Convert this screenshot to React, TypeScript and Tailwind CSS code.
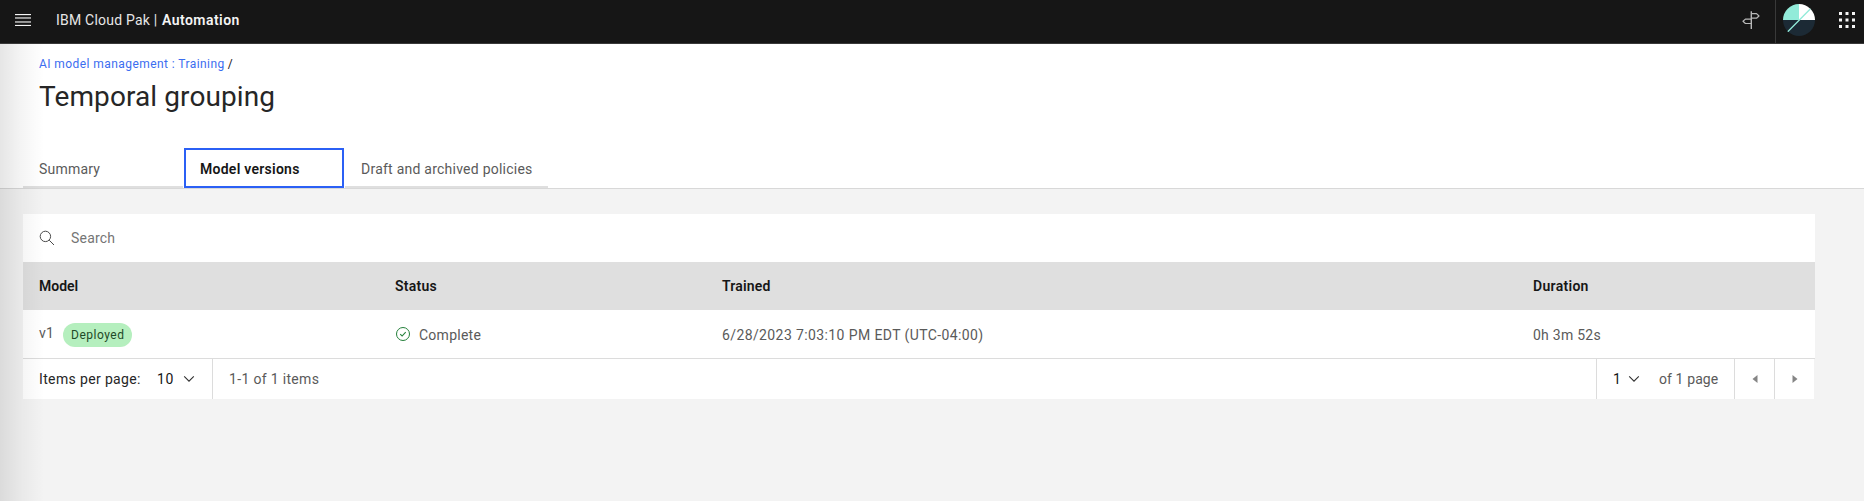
import type { ReactNode } from 'react';

function MenuIcon() {
  return (
    <svg width="16" height="12" viewBox="0 0 16 12" fill="#f4f4f4">
      <rect width="16" height="1.15" />
      <rect y="3.4" width="16" height="1.15" />
      <rect y="7.4" width="16" height="1.15" />
      <rect y="10.9" width="16" height="1.15" />
    </svg>
  );
}

function SignpostIcon() {
  return (
    <svg width="20" height="20" viewBox="0 0 20 20" fill="none" stroke="#b8b8b8" strokeWidth="1.2">
      <path d="M10.3 1.2V19" strokeWidth="1.4" />
      <path d="M10.3 3.6h5.2L18 6l-2.5 2.2h-5.2M10.3 9.1H4.4L2 11.3l2.4 2.2h5.9" strokeLinejoin="round" />
    </svg>
  );
}

function Avatar() {
  return (
    <svg width="32" height="32" viewBox="0 0 32 32">
      <path d="M0 16A16 16 0 0 1 16 0V16Z" fill="#92ebd9" />
      <path d="M16 0A16 16 0 0 1 32 16H16Z" fill="#fff" />
      <path d="M0 16A16 16 0 0 0 32 16Z" fill="#1c2a35" />
      <path d="M5.2 27.2 27 5.2" stroke="#92ebd9" strokeWidth="1.3" strokeLinecap="round" />
    </svg>
  );
}

function AppsIcon() {
  const steps = [0, 6.5, 13];
  return (
    <svg width="16" height="16" viewBox="0 0 16 16" fill="#f4f4f4">
      {steps.map((y) => steps.map((x) => <rect key={`${x}-${y}`} x={x} y={y} width="3" height="3" />))}
    </svg>
  );
}

function SearchIcon() {
  return (
    <svg width="16" height="16" viewBox="0 0 16 16" fill="none" stroke="#4a4a4a" strokeWidth="1">
      <circle cx="6.4" cy="6.4" r="5.2" />
      <path d="M10.2 10.2 15 15" />
    </svg>
  );
}

function Chevron() {
  return (
    <svg width="12" height="8" viewBox="0 0 12 8" fill="none" stroke="#303030" strokeWidth="1.1">
      <path d="M1.2 1.4 6 6.2l4.8-4.8" />
    </svg>
  );
}

function CheckIcon() {
  return (
    <svg width="16" height="16" viewBox="0 0 16 16" fill="none" stroke="#24803a" strokeWidth="1">
      <circle cx="8" cy="8" r="6.5" />
      <path d="M5.2 8.2 7.1 10l3.6-3.9" strokeWidth="1.1" />
    </svg>
  );
}

function Column({ className, title, children }: { className: string; title: ReactNode; children: ReactNode }) {
  return (
    <div className={className}>
      <div className="flex h-12 items-center bg-[#dfdfdf] pl-4 font-semibold text-[#161616]">{title}</div>
      <div className="flex h-12 items-center bg-white pl-4 pt-[2px] text-[#5a5a5a]">{children}</div>
    </div>
  );
}

export default function App() {
  return (
    <div className="relative flex h-[501px] w-[1864px] flex-col overflow-hidden bg-[#f3f3f3] font-['Roboto',sans-serif] text-sm leading-[18px] whitespace-nowrap text-[#161616]">
      <header className="flex h-11 shrink-0 items-center border-b border-[#393939] bg-[#161616] pb-[3px] text-[#f4f4f4]">
        <div className="ml-[15px]">
          <MenuIcon />
        </div>
        <div className="ml-[25px] flex">
          <span className="w-[106px] tracking-[0.22px] text-[#e6e6e6]">IBM Cloud Pak |</span>
          <span className="font-semibold tracking-[0.45px]">Automation</span>
        </div>
        <div className="ml-auto flex h-full items-center">
          <div className="mr-[14px]">
            <SignpostIcon />
          </div>
          <div className="-mb-[3px] h-[43px] w-px self-start bg-[#393939]" />
          <div className="ml-[7px]">
            <Avatar />
          </div>
          <div className="mr-[9px] ml-[24px]">
            <AppsIcon />
          </div>
        </div>
      </header>

      <section className="h-[145px] shrink-0 border-b border-[#d8d8d8] bg-white">
        <nav className="ml-[39px] flex gap-[3px] pt-[11px] text-xs leading-[18px]">
          <a className="tracking-[0.43px] text-[#3b6df0]">AI model management : Training</a>
          <span>/</span>
        </nav>
        <h1 className="mt-[6px] ml-[39px] text-[28px] leading-9 font-normal tracking-[0.1px] text-[#262626]">Temporal grouping</h1>
        <div className="mt-[33px] ml-[23px] flex h-10 gap-px">
          <div className="flex w-[160px] items-center border-b-2 border-[#dfdfdf] pt-[4px] pl-4 tracking-[0.2px] text-[#5a5a5a]">Summary</div>
          <div className="flex w-[160px] items-center border-2 border-[#2b60f5] pt-[2px] pl-[14px] font-semibold tracking-[0.26px]">Model versions</div>
          <div className="flex w-[203px] items-center border-b-2 border-[#dfdfdf] pt-[4px] pl-4 tracking-[0.24px] text-[#5a5a5a]">Draft and archived policies</div>
        </div>
      </section>

      <main className="mt-[25px] ml-[23px] w-[1792px]">
        <div className="flex h-12 items-center gap-4 bg-white pl-4">
          <SearchIcon />
          <span className="tracking-[0.2px] text-[#757575]">Search</span>
        </div>

        <div className="flex border-b border-[#dcdcdc]">
          <Column className="w-[356px]" title="Model">
            <span className="-mt-1 tracking-[0.3px]">v1</span>
            <span className="ml-[9px] flex h-6 w-[69px] items-center justify-center rounded-full bg-[#b5efbe] text-xs tracking-[0.5px] text-[#1f4a28]">Deployed</span>
          </Column>
          <Column className="w-[327px]" title={<span className="tracking-[0.25px]">Status</span>}>
            <span className="-mt-[3px]">
              <CheckIcon />
            </span>
            <span className="ml-2 tracking-[0.26px]">Complete</span>
          </Column>
          <Column className="w-[811px]" title={<span className="tracking-[0.16px]">Trained</span>}>
            <span className="tracking-[0.39px]">6/28/2023 7:03:10 PM EDT (UTC-04:00)</span>
          </Column>
          <Column className="flex-1" title={<span className="tracking-[0.3px]">Duration</span>}>
            <span className="tracking-[0.25px]">0h 3m 52s</span>
          </Column>
        </div>

        <footer className="flex h-10 w-[1791px] items-center bg-white pl-4 text-[#5a5a5a]">
          <span className="w-[118px] tracking-[0.36px] text-[#262626]">Items per page:</span>
          <span className="w-[26px] tracking-[0.6px] text-[#161616]">10</span>
          <Chevron />
          <div className="ml-[17px] h-10 w-px bg-[#dcdcdc]" />
          <span className="ml-4 tracking-[0.33px]">1-1 of 1 items</span>
          <div className="ml-auto flex h-10 items-center">
            <div className="h-10 w-px bg-[#dcdcdc]" />
            <span className="ml-4 w-[15px] text-[#161616]">1</span>
            <Chevron />
            <span className="ml-[19px] w-[75px] tracking-[0.1px]">of 1 page</span>
            <div className="h-10 w-px bg-[#dcdcdc]" />
            <div className="flex w-[39px] justify-center">
              <svg width="6" height="8" viewBox="0 0 6 8" fill="#858585">
                <path d="M5.5 0v8L0.5 4Z" />
              </svg>
            </div>
            <div className="h-10 w-px bg-[#dcdcdc]" />
            <div className="flex w-[39px] justify-center pl-px">
              <svg width="6" height="8" viewBox="0 0 6 8" fill="#858585">
                <path d="M0.5 0v8L5.5 4Z" />
              </svg>
            </div>
          </div>
        </footer>
      </main>

      <div className="pointer-events-none absolute top-11 bottom-0 left-0 w-11 bg-linear-to-r from-black/10 via-black/4 to-transparent" />
    </div>
  );
}
